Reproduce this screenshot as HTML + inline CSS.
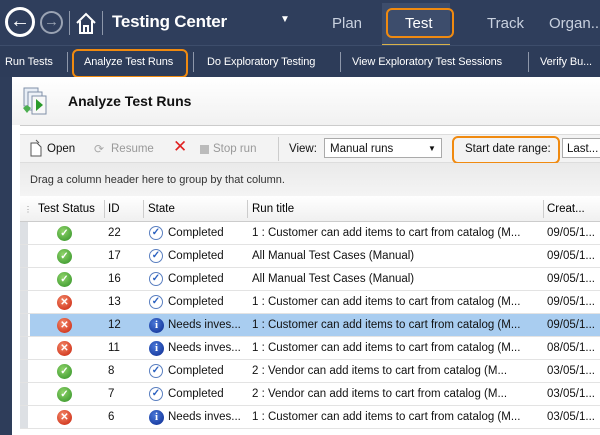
<!DOCTYPE html>
<html><head><style>
*{margin:0;padding:0;box-sizing:border-box}
body{width:600px;height:435px;overflow:hidden;background:#2e3d5a;font-family:"Liberation Sans",sans-serif;position:relative;font-size:12px}
.a{position:absolute;white-space:nowrap}
.top{left:0;top:0;width:600px;height:45px;background:#2f3e5c}
.sub{left:0;top:45px;width:600px;height:32px;background:#2d3c59;border-top:1px solid #3d4d6b}
.w{color:#fff}
.s{font-size:11px;letter-spacing:-0.1px}
.panel{left:12px;top:77px;width:588px;height:358px;background:#fff}
.hdr{left:12px;top:77px;width:588px;height:48px;background:linear-gradient(#fff,#f1f1f1)}
.row{left:20px;width:580px;height:23px;border-bottom:1px solid #e3e3e3;font-size:11.5px;color:#111}
.row span{position:absolute;top:5px}
.g{left:0;top:0;width:8px;height:22px;background:#dde0e4;position:absolute}
.ok{width:15px;height:15px;border-radius:50%;background:radial-gradient(circle at 40% 35%,#8fd46a,#2f8f25);position:absolute;top:4px;left:37px;color:#fff;font-size:10px;text-align:center;line-height:15px;font-weight:bold}
.er{width:15px;height:15px;border-radius:50%;background:radial-gradient(circle at 40% 35%,#f48a6a,#c8200a);position:absolute;top:4px;left:37px;color:#fff;font-size:10px;text-align:center;line-height:15px;font-weight:bold}
.ck{width:14px;height:14px;border-radius:50%;border:1px solid #5a7fc0;position:absolute;top:4px;left:129px;color:#2a60c0;font-size:10px;text-align:center;line-height:12px;font-weight:bold;background:#fff}
.in{width:15px;height:15px;border-radius:50%;background:radial-gradient(circle at 40% 35%,#4a78d8,#0a2a90);position:absolute;top:4px;left:129px;color:#fff;font-size:11px;text-align:center;line-height:15px;font-weight:bold;font-family:"Liberation Serif",serif}
.box{border:2px solid #f08a10;border-radius:6px}
</style></head><body>
<div class="a top"></div>
<div class="a" style="left:5px;top:7px;width:30px;height:30px;border:3px solid #fff;border-radius:50%;color:#fff;font-size:20px;line-height:22px;text-align:center;font-weight:bold">←</div>
<div class="a" style="left:40px;top:11px;width:23px;height:23px;border:2px solid #9aa3b3;border-radius:50%;color:#9aa3b3;font-size:15px;line-height:18px;text-align:center;font-weight:bold">→</div>
<div class="a" style="left:69px;top:11px;width:1px;height:24px;background:#8d97aa"></div>
<div class="a" style="left:102px;top:11px;width:1px;height:24px;background:#8d97aa"></div>
<svg class="a" style="left:75px;top:11px" width="22" height="24"><path d="M2 12 L11 3 L20 12 M5 10 V22 H17 V10 M9 22 V15 H13 V22" stroke="#fff" stroke-width="2" fill="none"/></svg>
<div class="a w" style="left:112px;top:12px;font-size:17px;font-weight:bold;letter-spacing:-0.2px">Testing Center</div>
<div class="a w" style="left:280px;top:14px;font-size:10px">▼</div>
<div class="a" style="left:332px;top:15px;font-size:15px;color:#c9d1df">Plan</div>
<div class="a" style="left:382px;top:3px;width:68px;height:42px;background:#3d4d6c"></div>
<div class="a" style="left:382px;top:44px;width:68px;height:3px;background:#d9b24a"></div>
<div class="a box" style="left:386px;top:8px;width:68px;height:30px"></div>
<div class="a w" style="left:405px;top:15px;font-size:15px">Test</div>
<div class="a" style="left:487px;top:15px;font-size:15px;color:#c9d1df">Track</div>
<div class="a" style="left:549px;top:15px;font-size:15px;color:#c9d1df">Organ...</div>
<div class="a sub"></div>
<div class="a w s" style="left:5px;top:56px">Run Tests</div>
<div class="a" style="left:67px;top:52px;width:1px;height:20px;background:#8d97aa"></div>
<div class="a box" style="left:72px;top:49px;width:116px;height:29px"></div>
<div class="a w s" style="left:84px;top:56px">Analyze Test Runs</div>
<div class="a" style="left:193px;top:52px;width:1px;height:20px;background:#8d97aa"></div>
<div class="a w s" style="left:207px;top:56px">Do Exploratory Testing</div>
<div class="a" style="left:340px;top:52px;width:1px;height:20px;background:#8d97aa"></div>
<div class="a w s" style="left:352px;top:56px">View Exploratory Test Sessions</div>
<div class="a" style="left:528px;top:52px;width:1px;height:20px;background:#8d97aa"></div>
<div class="a w s" style="left:540px;top:56px">Verify Bu...</div>
<div class="a panel"></div>
<div class="a hdr"></div>
<svg class="a" style="left:21px;top:86px" width="28" height="32"><rect x="3" y="2" width="14" height="18" fill="#e8eef6" stroke="#8090a8"/><rect x="7" y="6" width="14" height="18" fill="#eef2f8" stroke="#8090a8"/><rect x="11" y="10" width="14" height="18" fill="#f8f8f8" stroke="#8090a8"/><path d="M15 13 L22 19 L15 25Z" fill="#2a9a2a"/><path d="M2 22 L6 19 L10 22 L6 27Z" fill="#4caf50"/></svg>
<div class="a" style="left:68px;top:93px;font-size:14px;font-weight:bold;color:#111">Analyze Test Runs</div>
<div class="a" style="left:20px;top:125px;width:580px;height:1px;background:#ccc"></div>
<div class="a" style="left:20px;top:134px;width:580px;height:29px;background:#f3f3f3;border-top:1px solid #ddd;border-bottom:1px solid #ddd"></div>
<svg class="a" style="left:29px;top:139px" width="14" height="18"><path d="M2 4 H8 L12 8 V17 H2Z" fill="#fff" stroke="#555"/><path d="M7 1 L10 4" stroke="#555"/></svg>
<div class="a" style="left:47px;top:143px;font-size:11.5px;color:#111">Open</div>
<div class="a" style="left:94px;top:142px;font-size:12px;color:#aaa">⟳</div>
<div class="a" style="left:111px;top:143px;font-size:11.5px;color:#999">Resume</div>
<div class="a" style="left:173px;top:137px;font-size:17px;color:#e02020">✕</div>
<div class="a" style="left:200px;top:145px;width:9px;height:9px;background:#bbb"></div>
<div class="a" style="left:213px;top:143px;font-size:11.5px;color:#999">Stop run</div>
<div class="a" style="left:278px;top:137px;width:1px;height:24px;background:#ccc"></div>
<div class="a" style="left:289px;top:143px;font-size:11.5px;color:#111">View:</div>
<div class="a" style="left:324px;top:138px;width:118px;height:20px;background:#fff;border:1px solid #aaa"></div>
<div class="a" style="left:330px;top:143px;font-size:11.5px;color:#111">Manual runs</div>
<div class="a" style="left:428px;top:144px;font-size:8px;color:#111">▼</div>
<div class="a box" style="left:452px;top:136px;width:108px;height:28px"></div>
<div class="a" style="left:465px;top:143px;font-size:11.5px;color:#111">Start date range:</div>
<div class="a" style="left:562px;top:138px;width:40px;height:20px;background:#fff;border:1px solid #aaa"></div>
<div class="a" style="left:567px;top:143px;font-size:11.5px;color:#111">Last...</div>
<div class="a" style="left:20px;top:163px;width:580px;height:33px;background:linear-gradient(#eaeaea,#f4f4f4)"></div>
<div class="a" style="left:30px;top:174px;font-size:11px;color:#333">Drag a column header here to group by that column.</div>
<div class="a" style="left:20px;top:196px;width:580px;height:26px;background:linear-gradient(#fff,#f0f0f0);border-bottom:1px solid #ccc"></div>
<div class="a" style="left:24px;top:205px;font-size:8px;color:#888">⋮</div>
<div class="a" style="left:38px;top:203px;font-size:11.5px">Test Status</div>
<div class="a" style="left:104px;top:200px;width:1px;height:18px;background:#ccc"></div>
<div class="a" style="left:108px;top:203px;font-size:11.5px">ID</div>
<div class="a" style="left:143px;top:200px;width:1px;height:18px;background:#ccc"></div>
<div class="a" style="left:148px;top:203px;font-size:11.5px">State</div>
<div class="a" style="left:247px;top:200px;width:1px;height:18px;background:#ccc"></div>
<div class="a" style="left:252px;top:203px;font-size:11.5px">Run title</div>
<div class="a" style="left:543px;top:200px;width:1px;height:18px;background:#ccc"></div>
<div class="a" style="left:547px;top:203px;font-size:11.5px">Creat...</div>

<div class="a row" style="top:222px"><div class="g"></div><div class="ok">✓</div><span style="left:88px">22</span><div class="ck">✓</div><span style="left:148px">Completed</span><span style="left:232px">1 : Customer can add items to cart from catalog (M...</span><span style="left:527px">09/05/1...</span></div>
<div class="a row" style="top:245px"><div class="g"></div><div class="ok">✓</div><span style="left:88px">17</span><div class="ck">✓</div><span style="left:148px">Completed</span><span style="left:232px">All Manual Test Cases (Manual)</span><span style="left:527px">09/05/1...</span></div>
<div class="a row" style="top:268px"><div class="g"></div><div class="ok">✓</div><span style="left:88px">16</span><div class="ck">✓</div><span style="left:148px">Completed</span><span style="left:232px">All Manual Test Cases (Manual)</span><span style="left:527px">09/05/1...</span></div>
<div class="a row" style="top:291px"><div class="g"></div><div class="er">✕</div><span style="left:88px">13</span><div class="ck">✓</div><span style="left:148px">Completed</span><span style="left:232px">1 : Customer can add items to cart from catalog (M...</span><span style="left:527px">09/05/1...</span></div>
<div class="a row" style="top:314px;background:linear-gradient(90deg,#fff 0,#fff 10px,#a9cdf0 10px)"><div class="g"></div><div class="er">✕</div><span style="left:88px">12</span><div class="in">i</div><span style="left:148px">Needs inves...</span><span style="left:232px">1 : Customer can add items to cart from catalog (M...</span><span style="left:527px">09/05/1...</span></div>
<div class="a row" style="top:337px"><div class="g"></div><div class="er">✕</div><span style="left:88px">11</span><div class="in">i</div><span style="left:148px">Needs inves...</span><span style="left:232px">1 : Customer can add items to cart from catalog (M...</span><span style="left:527px">08/05/1...</span></div>
<div class="a row" style="top:360px"><div class="g"></div><div class="ok">✓</div><span style="left:88px">8</span><div class="ck">✓</div><span style="left:148px">Completed</span><span style="left:232px">2 : Vendor can add items to cart from catalog (M...</span><span style="left:527px">03/05/1...</span></div>
<div class="a row" style="top:383px"><div class="g"></div><div class="ok">✓</div><span style="left:88px">7</span><div class="ck">✓</div><span style="left:148px">Completed</span><span style="left:232px">2 : Vendor can add items to cart from catalog (M...</span><span style="left:527px">03/05/1...</span></div>
<div class="a row" style="top:406px"><div class="g"></div><div class="er">✕</div><span style="left:88px">6</span><div class="in">i</div><span style="left:148px">Needs inves...</span><span style="left:232px">1 : Customer can add items to cart from catalog (M...</span><span style="left:527px">03/05/1...</span></div>
</body></html>
